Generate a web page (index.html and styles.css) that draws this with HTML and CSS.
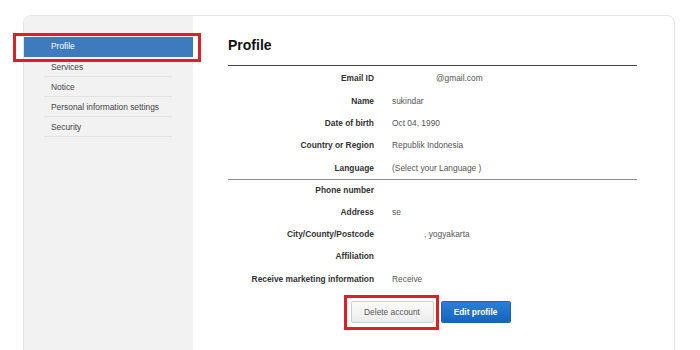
FILE: index.html
```html
<!DOCTYPE html>
<html lang="en">
<head>
  <meta charset="UTF-8" />
  <meta name="viewport" content="width=device-width, initial-scale=1.0" />
  <title>Profile</title>
  <link rel="stylesheet" href="styles.css">
</head>
<body>
  <div class="card">
    <ul class="side-nav">
      <li class="active">Profile<span class="mark"></span></li>
      <li>Services</li>
      <li>Notice</li>
      <li>Personal information settings</li>
      <li>Security</li>
    </ul>

    <div class="main">
      <h1>Profile</h1>

      <div class="group">
        <div class="row"><span class="label">Email ID</span><span class="value"><span class="blur-email"></span>@gmail.com</span></div>
        <div class="row"><span class="label">Name</span><span class="value">sukindar</span></div>
        <div class="row"><span class="label">Date of birth</span><span class="value">Oct 04, 1990</span></div>
        <div class="row"><span class="label">Country or Region</span><span class="value">Republik Indonesia</span></div>
        <div class="row"><span class="label">Language</span><span class="value">(Select your Language )</span></div>
      </div>

      <div class="group last">
        <div class="row"><span class="label">Phone number</span><span class="value"></span></div>
        <div class="row"><span class="label">Address</span><span class="value">se</span></div>
        <div class="row"><span class="label">City/County/Postcode</span><span class="value"><span class="blur-city"></span>, yogyakarta</span></div>
        <div class="row"><span class="label">Affiliation</span><span class="value"></span></div>
        <div class="row"><span class="label">Receive marketing information</span><span class="value">Receive</span></div>
      </div>

      <div class="actions">
        <span class="marked">
          <button class="btn btn-light">Delete account</button>
          <span class="mark"></span>
        </span>
        <button class="btn btn-blue">Edit profile</button>
      </div>
    </div>
  </div>
</body>
</html>
```

FILE: styles.css
```css
body {
  margin: 0;
  padding: 15px 25px 0 23px;
  font-family: "Liberation Sans", Arial, sans-serif;
  font-size: 8.4px;
  background: #fff;
  overflow: hidden;
}

.card {
  display: flex;
  height: 420px;
  border: 1px solid #e4e4e4;
  border-radius: 8px;
}

.side-nav {
  list-style: none;
  margin: 0;
  padding: 21px 0 0;
  width: 169px;
  flex-shrink: 0;
  background: #f2f2f2;
  border-radius: 7px 0 0 0;
}

.side-nav li {
  height: 19px;
  line-height: 20px;
  margin: 0 21px 0 20px;
  padding-left: 7px;
  color: #444;
  border-bottom: 1px solid #e1e1e1;
}

.side-nav li.active {
  position: relative;
  height: 20px;
  line-height: 19px;
  margin: 0;
  padding-left: 27px;
  background: #3d7bbd;
  color: #fff;
  border-bottom: none;
}

.mark {
  position: absolute;
  border: 3px solid #d8212b;
  pointer-events: none;
}

.side-nav li.active .mark {
  top: -4px;
  left: -11px;
  right: -8px;
  bottom: -5px;
}

.main {
  flex: 1;
  padding: 20px 37px 0 35px;
}

h1 {
  margin: 0;
  padding-bottom: 11px;
  font-size: 14px;
  line-height: 18px;
  color: #111;
  border-bottom: 1px solid #444;
}

.group {
  padding-top: 1px;
  border-bottom: 1px solid #8a8a8a;
}

.group.last {
  padding-top: 0;
  border-bottom: none;
}

.row {
  display: flex;
  height: 22.4px;
  align-items: center;
}

.group.last .row {
  height: 22.2px;
}

.group.last .row:first-child {
  height: 21px;
}

.label {
  width: 146px;
  text-align: right;
  font-weight: bold;
  color: #333;
}

.value {
  margin-left: 18px;
  color: #555;
}

.blur-email {
  display: inline-block;
  width: 44px;
}

.blur-city {
  display: inline-block;
  width: 32px;
}

.actions {
  display: flex;
  justify-content: center;
  gap: 7px;
  margin-top: 11px;
  padding-right: 4px;
}

.marked {
  position: relative;
  display: flex;
}

.marked .mark {
  top: -6px;
  left: -7px;
  right: -5px;
  bottom: -7px;
}

.btn {
  height: 22px;
  font-family: inherit;
  font-size: 8.4px;
  border-radius: 2px;
  cursor: pointer;
}

.btn-light {
  width: 83px;
  background: linear-gradient(#fbfbfb, #ececec);
  border: 1px solid #cfcfcf;
  color: #555;
}

.btn-blue {
  width: 70px;
  background: linear-gradient(#2b7fd8, #1664bf);
  border: 1px solid #1a66bd;
  color: #fff;
  font-weight: bold;
}
```
